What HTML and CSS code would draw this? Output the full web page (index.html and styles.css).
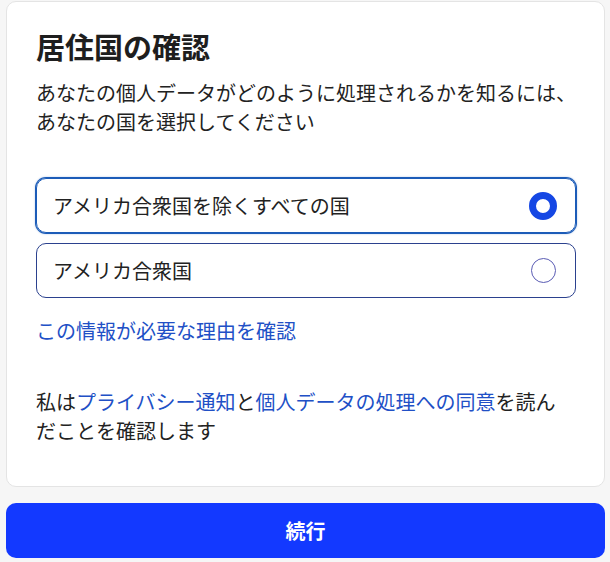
FILE: index.html
```html
<!DOCTYPE html>
<html lang="ja">
<head>
<meta charset="utf-8">
<title>居住国の確認</title>
<link rel="stylesheet" href="styles.css">
</head>
<body>
<div class="page">
  <section class="card">
    <h1 class="title">居住国の確認</h1>
    <p class="desc">あなたの個人データがどのように処理されるかを知るには、あなたの国を選択してください</p>
    <div class="options">
      <label class="option selected">
        <span class="option-label">アメリカ合衆国を除くすべての国</span>
        <span class="radio radio-on"></span>
      </label>
      <label class="option">
        <span class="option-label">アメリカ合衆国</span>
        <span class="radio"></span>
      </label>
    </div>
    <a class="why" href="#">この情報が必要な理由を確認</a>
    <p class="consent">私は<a href="#">プライバシー通知</a>と<a href="#">個人データの処理への同意</a>を読んだことを確認します</p>
  </section>
  <button class="continue" type="button">続行</button>
</div>
</body>
</html>
```

FILE: styles.css
```css
html, body {
  margin: 0;
  padding: 0;
  background: #f6f6f6;
}
body {
  font-family: "Noto Sans CJK JP", "Noto Sans", sans-serif;
  color: #222222;
}
.page {
  padding: 1px 5px 0 6px;
  display: flex;
  flex-direction: column;
  gap: 16px;
}
.card {
  background: #ffffff;
  border: 1px solid #e4e4e4;
  border-radius: 10px;
  padding: 26px 28px 41px 29px;
  display: flex;
  flex-direction: column;
}
.title {
  margin: 0;
  font-size: 29px;
  line-height: 36px;
  font-weight: 700;
  color: #1e1e1e;
}
.desc {
  margin: 14px 0 0;
  font-size: 20px;
  line-height: 29px;
}
.options {
  margin-top: 42px;
  display: flex;
  flex-direction: column;
  gap: 10px;
}
.option {
  height: 53px;
  border: 1px solid #2b418e;
  border-radius: 10px;
  display: flex;
  align-items: center;
  justify-content: space-between;
  padding: 0 19px 0 16px;
  font-size: 20px;
}
.option.selected {
  border-color: #1c5cb8;
  box-shadow: 0 0 0 1px #1c5cb8, 0 0 2px 1px rgba(28, 92, 184, 0.35);
  padding-right: 18px;
}
.option-label {
  line-height: 29px;
}
.radio {
  width: 23px;
  height: 23px;
  border: 1px solid #5a5cb4;
  border-radius: 50%;
  box-sizing: content-box;
}
.radio-on {
  width: 14px;
  height: 14px;
  border: 7px solid #1547e4;
}
.why {
  margin-top: 18px;
  font-size: 20px;
  line-height: 29px;
  color: #2150c6;
  text-decoration: none;
  align-self: flex-start;
}
.consent {
  margin: 42px 0 0;
  padding-right: 4px;
  font-size: 20px;
  line-height: 29px;
}
.consent a {
  color: #2150c6;
  text-decoration: none;
}
.continue {
  height: 55px;
  border: none;
  border-radius: 10px;
  background: #1339ff;
  color: #ffffff;
  font-family: "Noto Sans CJK JP", "Noto Sans", sans-serif;
  font-size: 20px;
  font-weight: 700;
  cursor: pointer;
}
```
